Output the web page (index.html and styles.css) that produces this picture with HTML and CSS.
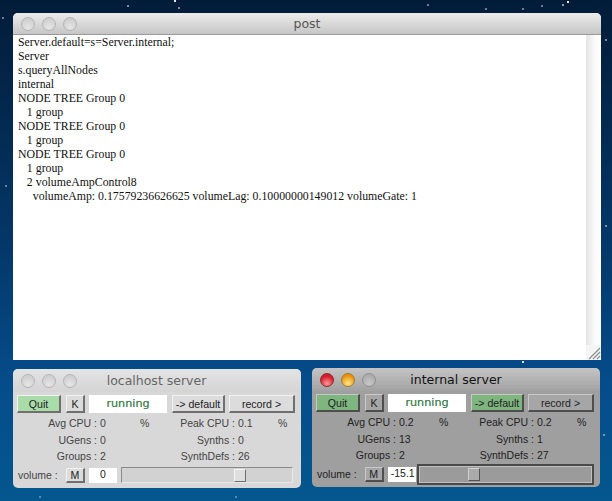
FILE: index.html
```html
<!DOCTYPE html>
<html lang="en">
<head>
<meta charset="utf-8">
<title>post</title>
<link rel="stylesheet" href="styles.css">
</head>
<body>
<main class="desktop">
  <section class="window post">
    <header class="titlebar">
      <div class="lights"><i class="light"></i><i class="light"></i><i class="light"></i></div>
      <h1 class="title">post</h1>
    </header>
    <div class="post-body">
      <pre class="log">Server.default=s=Server.internal;
Server
s.queryAllNodes
internal
NODE TREE Group 0
   1 group
NODE TREE Group 0
   1 group
NODE TREE Group 0
   1 group
   2 volumeAmpControl8
     volumeAmp: 0.17579236626625 volumeLag: 0.10000000149012 volumeGate: 1</pre>
      <div class="scroller">
        <div class="track"></div>
        <svg class="grip" width="15" height="15" viewBox="0 0 15 15"><path d="M3 14 14 3M7 14 14 7M11 14 14 11" stroke="#8e8e8e" stroke-width="1.2" fill="none"/></svg>
      </div>
    </div>
  </section>

  <section class="window server localhost">
    <header class="titlebar">
      <div class="lights"><i class="light"></i><i class="light"></i><i class="light"></i></div>
      <h2 class="title">localhost server</h2>
    </header>
    <div class="panel">
      <div class="controls">
        <button class="btn quit on">Quit</button>
        <button class="btn kill">K</button>
        <div class="status">running</div>
        <button class="btn dflt">-&gt; default</button>
        <button class="btn rec">record &gt;</button>
      </div>
      <div class="stats">
        <span class="l1">Avg CPU :</span><span class="v1">0</span><span class="u1">%</span>
        <span class="l2">Peak CPU :</span><span class="v2">0.1</span><span class="u2">%</span>
        <span class="l1">UGens :</span><span class="v1">0</span><span class="u1"></span>
        <span class="l2">Synths :</span><span class="v2">0</span><span class="u2"></span>
        <span class="l1">Groups :</span><span class="v1">2</span><span class="u1"></span>
        <span class="l2">SynthDefs :</span><span class="v2">26</span><span class="u2"></span>
      </div>
      <div class="volume">
        <span class="vol-label">volume :</span>
        <button class="btn mute">M</button>
        <div class="vol-value center">0</div>
        <div class="slider"><div class="fill" style="width:112px"></div><div class="thumb"></div></div>
      </div>
    </div>
  </section>

  <section class="window server internal">
    <header class="titlebar">
      <div class="lights"><i class="light red"></i><i class="light yellow"></i><i class="light"></i></div>
      <h2 class="title">internal server</h2>
    </header>
    <div class="panel">
      <div class="controls">
        <button class="btn quit on">Quit</button>
        <button class="btn kill">K</button>
        <div class="status">running</div>
        <button class="btn dflt on">-&gt; default</button>
        <button class="btn rec">record &gt;</button>
      </div>
      <div class="stats">
        <span class="l1">Avg CPU :</span><span class="v1">0.2</span><span class="u1">%</span>
        <span class="l2">Peak CPU :</span><span class="v2">0.2</span><span class="u2">%</span>
        <span class="l1">UGens :</span><span class="v1">13</span><span class="u1"></span>
        <span class="l2">Synths :</span><span class="v2">1</span><span class="u2"></span>
        <span class="l1">Groups :</span><span class="v1">2</span><span class="u1"></span>
        <span class="l2">SynthDefs :</span><span class="v2">27</span><span class="u2"></span>
      </div>
      <div class="volume">
        <span class="vol-label">volume :</span>
        <button class="btn mute">M</button>
        <div class="vol-value">-15.1</div>
        <div class="slider"><div class="fill" style="width:49px"></div><div class="thumb"></div></div>
      </div>
    </div>
  </section>
</main>
</body>
</html>
```
FILE: styles.css
```css
* { box-sizing: border-box; }
html, body { margin: 0; padding: 0; }
body { width: 612px; height: 501px; overflow: hidden; }

.desktop {
  position: relative;
  width: 612px;
  height: 501px;
  background-color: #04274d;
  background-image:
    radial-gradient(circle at 175px 1px, #dfe8f0 0 1px, transparent 1.6px),
    radial-gradient(circle at 128px 6px, #8ea4b8 0 .6px, transparent 1.2px),
    radial-gradient(circle at 179px 8px, #8ea4b8 0 .6px, transparent 1.2px),
    radial-gradient(circle at 3px 18px, #7d93a8 0 .6px, transparent 1.2px),
    radial-gradient(circle at 568px 2px, #dfe8f0 0 .9px, transparent 1.5px),
    radial-gradient(circle at 563px 5px, #a6b8c8 0 .6px, transparent 1.2px),
    radial-gradient(circle at 542px 6px, #7d93a8 0 .6px, transparent 1.2px),
    radial-gradient(circle at 428px 5px, #7d93a8 0 .6px, transparent 1.2px),
    radial-gradient(circle at 486px 9px, #7d93a8 0 .6px, transparent 1.2px),
    radial-gradient(circle at 523px 9px, #7d93a8 0 .6px, transparent 1.2px),
    radial-gradient(circle at 606px 40px, #8ea4b8 0 .6px, transparent 1.2px),
    radial-gradient(circle at 606px 226px, #8ea4b8 0 .6px, transparent 1.2px),
    radial-gradient(circle at 6px 186px, #7d93a8 0 .6px, transparent 1.2px),
    radial-gradient(circle at 523px 362px, #dfe8f0 0 .9px, transparent 1.5px),
    radial-gradient(circle at 604px 435px, #8ea4b8 0 .6px, transparent 1.2px),
    radial-gradient(circle at 40px 497px, #6f90b0 0 .6px, transparent 1.2px),
    radial-gradient(circle at 236px 497px, #6f90b0 0 .6px, transparent 1.2px),
    linear-gradient(180deg, #021c38 0, #03264a 90px, #04386a 250px, #054c8a 380px, #04578f 501px);
  font-family: "Liberation Sans", Arial, sans-serif;
}

.window { position: absolute; border-radius: 5px 5px 0 0; overflow: hidden; }
.post { left: 13px; top: 13px; width: 588px; height: 347px; background: #fff; }
.server { width: 288px; height: 119px; border-radius: 5px; }
.localhost { left: 13px; top: 369px; background: #d8d8d8; }
.internal { left: 312px; top: 368px; background: #9f9f9f; }

.titlebar {
  position: relative;
  display: flex;
  align-items: center;
  justify-content: center;
  height: 22px;
  background: linear-gradient(180deg, #ececec, #c6c6c6);
  border-bottom: 1px solid #9a9a9a;
}
.server .titlebar { border-bottom: 0; height: 23px; background: linear-gradient(180deg, #e4e4e4, #d4d4d4); }
.internal .titlebar { background: linear-gradient(180deg, #c4c4c4, #a2a2a2); }

.lights { position: absolute; left: 8px; top: 4px; display: flex; gap: 7px; }
.server .lights { top: 5px; }
.light {
  display: block;
  width: 14px;
  height: 14px;
  border-radius: 50%;
  border: 1px solid #b4b4b4;
  background: radial-gradient(circle at 50% 80%, #e6e6e6, #d0d0d0 70%);
}
.internal .light { border-color: #8f8f8f; background: radial-gradient(circle at 50% 80%, #c8c8c8, #adadad 70%); }
.internal .light.red { border-color: #8a2a2a; background: radial-gradient(circle at 50% 80%, #ff9a9a, #d41c2c 65%); }
.internal .light.yellow { border-color: #a37a22; background: radial-gradient(circle at 50% 80%, #ffe98a, #e8920f 70%); }

.title { margin: 0; font: 400 12.5px "DejaVu Sans", sans-serif; color: #555; }
.internal .title { color: #111; }
.localhost .title { margin-left: -1px; color: #666; }

.post-body { position: relative; display: flex; height: 325px; }
.log {
  flex: 1;
  margin: 0;
  padding: 0 0 0 5px;
  font: 11.82px/14px "Liberation Serif", "Times New Roman", serif;
  color: #111;
  white-space: pre;
}
.scroller { display: flex; flex-direction: column; width: 15px; }
.track { flex: 1; background: linear-gradient(90deg, #e4e4e4, #fafafa 60%, #ffffff); }
.grip { display: block; flex: none; background: #f4f4f4; }

.panel { padding: 3px 6px 0 4px; font-size: 10.5px; color: #444; }
.internal .panel { color: #222; }

.controls { display: flex; align-items: stretch; height: 18px; }
.btn {
  margin: 0;
  padding: 0;
  font: 10.6px "Liberation Sans", Arial, sans-serif;
  color: #222;
  background: #dcdcdc;
  border-style: solid;
  border-width: 1px 2px 2px 1px;
  border-color: #f2f2f2 #6f6f6f #6f6f6f #f2f2f2;
}
.internal .btn { background: #a6a6a6; border-color: #c8c8c8 #4e4e4e #4e4e4e #c8c8c8; }
.btn.on, .internal .btn.on { background: #7fb57f; }
.localhost .btn.on { background: #a9dca9; }
.quit { width: 44px; }
.kill { width: 19px; margin-left: 5px; }
.status {
  width: 78px;
  margin-left: 4px;
  background: #fff;
  color: #4f8a5a;
  font: 11.2px/18px "DejaVu Sans", sans-serif;
  text-shadow: 0 0 .5px #4f8a5a;
  text-align: center;
}
.dflt { width: 53px; margin-left: 5px; }
.rec { width: 66px; margin-left: 4px; }

.stats {
  display: grid;
  grid-template-columns: 80px 43px 20px 75px 43px 10px;
  grid-auto-rows: 16.5px;
  margin-top: 2px;
  line-height: 16.5px;
}
.l1, .l2 { text-align: right; white-space: nowrap; }
.v1, .v2 { padding-left: 3px; }

.volume { display: flex; align-items: center; height: 17px; margin-top: 2px; margin-left: 1px; }
.vol-label { width: 48px; font-size: 10.5px; white-space: nowrap; }
.mute { width: 19px; height: 15px; }
.vol-value {
  width: 28px;
  height: 15px;
  margin-left: 4px;
  background: #fff;
  font-size: 10.5px;
  line-height: 13px;
  text-align: right;
  padding-right: 1px;
  color: #222;
}
.vol-value.center { text-align: center; padding-right: 0; }
.slider {
  position: relative;
  display: flex;
  align-items: center;
  width: 172px;
  height: 16px;
  margin-left: 4px;
  background: #d2d2d2;
  border: 1px solid;
  border-color: #8a8a8a #e8e8e8 #e8e8e8 #8a8a8a;
}
.internal .slider {
  width: 178px;
  height: 21px;
  margin-left: 1px;
  background: #9b9b9b;
  border: 2px solid #4a4a4a;
  box-shadow: inset 0 0 0 1px #c0c0c0;
}
.fill { height: 100%; flex: none; }
.thumb {
  flex: none;
  width: 12px;
  height: 13px;
  background: #dedede;
  border: 1px solid;
  border-color: #f4f4f4 #6f6f6f #6f6f6f #f4f4f4;
}
.internal .thumb { background: #aaa; border-color: #d0d0d0 #555 #555 #d0d0d0; }
```
